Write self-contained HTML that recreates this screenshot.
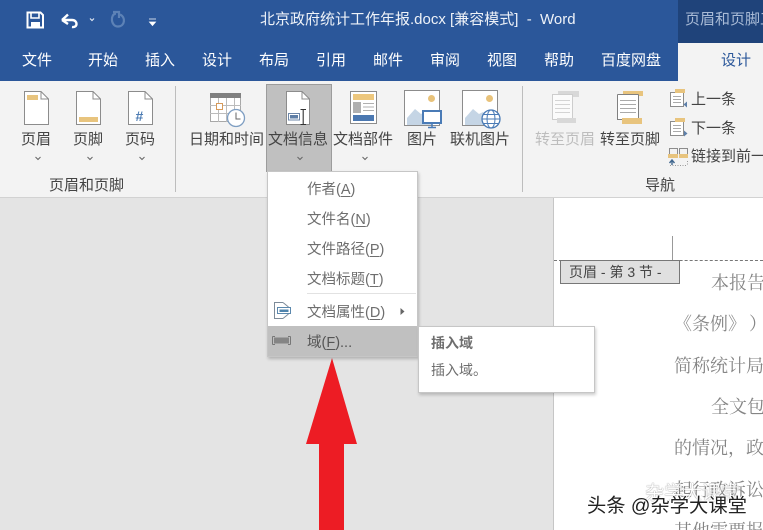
<!DOCTYPE html>
<html lang="zh">
<head>
<meta charset="utf-8">
<style>
html,body{margin:0;padding:0;width:763px;height:530px;overflow:hidden;background:#e4e4e4}
body{position:relative;font-family:"Liberation Sans","Noto Sans CJK SC",sans-serif}
.b{position:absolute}
.t{position:absolute;white-space:nowrap;font-size:15px;line-height:20px;height:20px;color:#444}
.w{color:#fff}
.m{color:#6e6e6e;font-size:14.5px}
.d{font-family:"Liberation Serif","Noto Serif CJK SC",serif;font-size:18px;color:#858585;line-height:24px;height:24px}
u{text-underline-offset:2px;text-decoration-thickness:1px}
svg{position:absolute;left:0;top:0}
</style>
</head>
<body>
<!-- chrome backgrounds -->
<div class="b" style="left:0;top:0;width:763px;height:81px;background:#2b579a"></div>
<div class="b" style="left:678px;top:0;width:85px;height:43px;background:#1f437a"></div>
<div class="b" style="left:0;top:81px;width:763px;height:116px;background:#f3f3f3;border-bottom:1px solid #d2d2d2"></div>
<div class="b" style="left:678px;top:43px;width:85px;height:38px;background:#f3f3f3"></div>
<div class="b" style="left:175px;top:86px;width:1px;height:106px;background:#bdbdbd"></div>
<div class="b" style="left:522px;top:86px;width:1px;height:106px;background:#bdbdbd"></div>
<div class="b" style="left:266px;top:84px;width:64px;height:86px;background:#c0c0c0;border:1px solid #9c9c9c"></div>
<!-- document page -->
<div class="b" style="left:553px;top:198px;width:210px;height:332px;background:#fff;border-left:1px solid #c6c6c6"></div>
<div class="b" style="left:554px;top:260px;width:209px;border-top:1px dashed #777"></div>
<div class="b" style="left:672px;top:236px;width:1px;height:24px;background:#999"></div>
<div class="b" style="left:560px;top:260px;width:118px;height:22px;background:#e0e0e0;border:1px solid #777"></div>
<div class="t" style="left:569px;top:262px;font-size:14px;color:#444">页眉 - 第 3 节 -</div>
<div class="t d" style="left:711px;top:271px">本报告</div>
<div class="t d" style="left:674px;top:312px">《条例》</div>
<div class="t d" style="left:749px;top:312px">）</div>
<div class="t d" style="left:674px;top:354px">简称统计局</div>
<div class="t d" style="left:711px;top:395px">全文包</div>
<div class="t d" style="left:674px;top:436px">的情况，政</div>
<div class="t d" style="left:674px;top:478px">起行政诉讼</div>
<div class="t d" style="left:674px;top:519px">其他需要报</div>
<!-- title bar -->
<div class="t w" style="left:260px;top:10px;color:#eef2f8">北京政府统计工作年报.docx [兼容模式]&nbsp; -&nbsp; Word</div>
<div class="t" style="left:685px;top:10px;width:78px;overflow:hidden;color:#a9bbd6">页眉和页脚工具</div>
<!-- tabs -->
<div class="t w" style="left:22px;top:51px">文件</div>
<div class="t w" style="left:88px;top:51px">开始</div>
<div class="t w" style="left:145px;top:51px">插入</div>
<div class="t w" style="left:202px;top:51px">设计</div>
<div class="t w" style="left:259px;top:51px">布局</div>
<div class="t w" style="left:316px;top:51px">引用</div>
<div class="t w" style="left:373px;top:51px">邮件</div>
<div class="t w" style="left:430px;top:51px">审阅</div>
<div class="t w" style="left:487px;top:51px">视图</div>
<div class="t w" style="left:544px;top:51px">帮助</div>
<div class="t w" style="left:601px;top:51px">百度网盘</div>
<div class="t" style="left:721px;top:51px;color:#2b579a">设计</div>
<!-- ribbon labels -->
<div class="t" style="left:21px;top:130px">页眉</div>
<div class="t" style="left:73px;top:130px">页脚</div>
<div class="t" style="left:125px;top:130px">页码</div>
<div class="t" style="left:189px;top:130px">日期和时间</div>
<div class="t" style="left:268px;top:130px">文档信息</div>
<div class="t" style="left:333px;top:130px">文档部件</div>
<div class="t" style="left:407px;top:130px">图片</div>
<div class="t" style="left:450px;top:130px">联机图片</div>
<div class="t" style="left:535px;top:130px;color:#bdbdbd">转至页眉</div>
<div class="t" style="left:600px;top:130px">转至页脚</div>
<div class="t" style="left:691px;top:90px">上一条</div>
<div class="t" style="left:691px;top:119px">下一条</div>
<div class="t" style="left:691px;top:147px">链接到前一条</div>
<div class="t" style="left:49px;top:176px">页眉和页脚</div>
<div class="t" style="left:645px;top:176px">导航</div>

<!-- icons -->
<svg width="763" height="530" viewBox="0 0 763 530" fill="none">
  <!-- QAT -->
  <path d="M27.5 12.5H40.5L43 15V27.5H27.5Z" stroke="#fff" stroke-width="2"/>
  <path d="M31 13V18H39V13" stroke="#fff" stroke-width="1.6"/>
  <rect x="31" y="22" width="9" height="5.5" fill="#fff"/>
  <path d="M62 20L68 14.5M62 20L68 24M63 20H72C78 20 78 28 72 27" stroke="#fff" stroke-width="2.4"/>
  <path d="M90 18.5L92 20.5L94 18.5" stroke="#dfe6f1" stroke-width="1.2"/>
  <path d="M116 13.5C110 14 110.500 26.500 118 26.500C125 26.500 126 17 120 14.500M113 12H119V18" stroke="#5d82b6" stroke-width="2.2"/>
  <path d="M149 19H156M149.500 22H155.500L152.500 25.500Z" fill="#fff" stroke="#fff" stroke-width="0.8"/>
  <!-- header -->
  <path d="M24.500 91.500H41L48.500 99V124.500H24.500Z" fill="#fff" stroke="#8c8c8c"/><path d="M41 91.500V99H48.500" stroke="#8c8c8c"/>
  <rect x="27" y="95" width="11" height="5" fill="#e8c47e"/>
  <!-- footer -->
  <path d="M76.500 91.500H93L100.500 99V124.500H76.500Z" fill="#fff" stroke="#8c8c8c"/><path d="M93 91.500V99H100.500" stroke="#8c8c8c"/>
  <rect x="79" y="117" width="19" height="5" fill="#e8c47e"/>
  <!-- page number -->
  <path d="M128.500 91.500H145L152.500 99V124.500H128.500Z" fill="#fff" stroke="#8c8c8c"/><path d="M145 91.500V99H152.500" stroke="#8c8c8c"/>
  <text x="135.500" y="121" font-family="Liberation Sans" font-size="14" font-weight="bold" fill="#4d7cb3">#</text>
  <!-- chevrons -->
  <path d="M35.500 157L38 159.500L40.500 157M87.500 157L90 159.500L92.500 157M139.500 157L142 159.500L144.500 157M297.500 157L300 159.500L302.500 157M362.500 157L365 159.500L367.500 157" stroke="#666" stroke-width="1"/>
  <!-- calendar -->
  <rect x="210.500" y="93.500" width="30" height="28" fill="#fff" stroke="#a8a8a8"/>
  <rect x="210" y="93" width="31" height="5" fill="#808080"/>
  <path d="M218.500 98V122M226.500 98V122M234.500 98V122M210 105.500H241M210 113.500H241" stroke="#bcbcbc"/>
  <rect x="216.500" y="103.500" width="6" height="6" fill="#fff" stroke="#d79a59"/>
  <circle cx="236" cy="118" r="8.500" fill="#fff" stroke="#7e9ec2" stroke-width="1.300"/>
  <path d="M236 112.500V119H240.500" stroke="#666"/>
  <!-- doc info -->
  <path d="M286.500 91.500H302L309.500 99V124.500H286.500Z" fill="#fff" stroke="#8c8c8c"/><path d="M302 91.500V99H309.500" stroke="#8c8c8c"/>
  <rect x="288.500" y="113.500" width="11" height="6.500" fill="#fff" stroke="#6e87a8"/>
  <rect x="290" y="115" width="8" height="3.500" fill="#5e7ea6"/>
  <path d="M300.500 109.500H306M300.500 124.500H306M303.200 109.500V124.500" stroke="#333" stroke-width="1.100"/>
  <!-- parts -->
  <rect x="350.500" y="91.500" width="26" height="32" fill="#fff" stroke="#8c8c8c"/>
  <rect x="353" y="94" width="21" height="6" fill="#edc77d"/>
  <rect x="353" y="102" width="8" height="11" fill="#b0b0b0"/>
  <path d="M363 103.500H374M363 107H374M363 110.500H374" stroke="#b0b0b0"/>
  <rect x="353" y="115" width="21" height="6" fill="#4b78b1"/>
  <!-- picture -->
  <rect x="404.500" y="90.500" width="35" height="35" fill="#fff" stroke="#8c8c8c"/>
  <circle cx="431.500" cy="98.500" r="3.500" fill="#e8c27a"/>
  <path d="M407 125V118L415 109L421 114L425 112L432 125Z" fill="#c5d5e5"/>
  <rect x="423" y="111" width="18" height="12" fill="#fff" stroke="#4a7bb6" stroke-width="2"/>
  <path d="M432 124V127M428 127.500H436" stroke="#4a7bb6" stroke-width="1.500"/>
  <!-- online picture -->
  <rect x="462.500" y="90.500" width="35" height="35" fill="#fff" stroke="#8c8c8c"/>
  <circle cx="489.500" cy="98.500" r="3.500" fill="#e8c27a"/>
  <path d="M465 125V118L473 109L479 114L483 112L490 125Z" fill="#c5d5e5"/>
  <circle cx="491" cy="119" r="9" fill="#fff" stroke="#4a7bb6" stroke-width="1.300"/>
  <ellipse cx="491" cy="119" rx="4" ry="9" stroke="#4a7bb6"/>
  <path d="M482 119H500M483.500 114.500H498.500M483.500 123.500H498.500" stroke="#4a7bb6"/>
  <!-- goto header (disabled) -->
  <rect x="558" y="91" width="21" height="6" fill="#d8d8d8"/>
  <rect x="552.500" y="94.500" width="20" height="25" fill="#fbfbfb" stroke="#cdcdcd"/>
  <path d="M555 100.500H570M555 104.500H570M555 108.500H570M555 112.500H570" stroke="#d4d4d4"/>
  <rect x="557" y="118" width="19" height="5" fill="#d8d8d8"/>
  <!-- goto footer -->
  <rect x="623" y="91" width="20" height="5" fill="#e8c47e"/>
  <rect x="618" y="95" width="20" height="24" fill="#fff"/>
  <path d="M638.500 94.500V119.500M617.500 94.500H638.500M617.500 94.500V119.500H622" stroke="#808080"/>
  <path d="M620 100.500H636M620 104.500H636M620 108.500H636M620 112.500H636" stroke="#aaa"/>
  <rect x="622" y="118" width="20" height="6" fill="#e8c47e"/>
  <!-- prev / next -->
  <rect x="670.500" y="92.500" width="13" height="14" fill="#fff" stroke="#8c8c8c"/>
  <rect x="675" y="89" width="10" height="4" fill="#e8c47e"/>
  <path d="M673 96.500H681M673 99.500H681M673 102.500H681" stroke="#aaa"/>
  <path d="M687 101.500V107.500L683.500 104.500Z" fill="#5d7fa9"/>
  <rect x="670.500" y="121.500" width="13" height="14" fill="#fff" stroke="#8c8c8c"/>
  <rect x="675" y="118" width="10" height="4" fill="#e8c47e"/>
  <path d="M673 125.500H681M673 128.500H681M673 131.500H681" stroke="#aaa"/>
  <path d="M684 130.500V136.500L687.500 133.500Z" fill="#5d7fa9"/>
  <!-- link -->
  <path d="M669.500 154V148.500H677.500V154M679.500 154V148.500H687.500V154" stroke="#8c8c8c"/>
  <rect x="668" y="154" width="10" height="4" fill="#e8c47e"/>
  <rect x="679" y="154" width="9" height="4" fill="#e8c47e"/>
  <path d="M670 165.500H686M687.500 161V165" stroke="#999" stroke-dasharray="1 1.500"/>
  <path d="M672 165V161M669.500 163L672 160L674.500 163" stroke="#42688f" stroke-width="1.400"/>
  <!-- arrow -->
  <path d="M332 358L357 444H344V530H319V444H306Z" fill="#ed1c24"/>
</svg>

<!-- dropdown menu -->
<div class="b" style="left:267px;top:171px;width:151px;height:186px;background:#fff;border:1px solid #c6c6c6;box-sizing:border-box;box-shadow:1px 2px 3px rgba(0,0,0,.22)"></div>
<div class="b" style="left:268px;top:326px;width:149px;height:30px;background:#c0c0c0"></div>
<div class="b" style="left:307px;top:293px;width:109px;height:1px;background:#e2e2e2"></div>
<div class="t m" style="left:307px;top:180px">作者(<u>A</u>)</div>
<div class="t m" style="left:307px;top:210px">文件名(<u>N</u>)</div>
<div class="t m" style="left:307px;top:240px">文件路径(<u>P</u>)</div>
<div class="t m" style="left:307px;top:270px">文档标题(<u>T</u>)</div>
<div class="t m" style="left:307px;top:303px">文档属性(<u>D</u>)</div>
<div class="t m" style="left:307px;top:333px;color:#555">域(<u>F</u>)...</div>
<!-- tooltip -->
<div class="b" style="left:418px;top:326px;width:177px;height:67px;background:#fff;border:1px solid #c6c6c6;box-sizing:border-box;box-shadow:1px 2px 3px rgba(0,0,0,.2)"></div>
<div class="t" style="left:431px;top:333px;font-size:14px;font-weight:bold;color:#6e6e6e">插入域</div>
<div class="t" style="left:431px;top:360px;font-size:14px;color:#6e6e6e">插入域。</div>
<svg width="763" height="530" viewBox="0 0 763 530" fill="none" style="pointer-events:none">
  <path d="M283 302.500H274.500V318.500H283M283 302.500L288.500 307M283 318.500L288.500 314" stroke="#7d8b99"/>
  <rect x="277.500" y="307.500" width="13" height="6" fill="#fff" stroke="#5b88ad"/>
  <rect x="279.500" y="309.500" width="9" height="2.500" fill="#4f84ad"/>
  <path d="M272.500 336.500V344.500M290.500 336.500V344.500M272.500 336.500H275M272.500 344.500H275M290.500 336.500H288M290.500 344.500H288" stroke="#777"/>
  <rect x="274" y="337.500" width="15" height="6" fill="#858585"/>
  <path d="M400.500 308L404.500 311.500L400.500 315Z" fill="#666"/>
</svg>
<!-- watermark -->
<div class="t" style="left:645px;top:483px;font-size:19px;line-height:22px;height:22px;color:#fff;text-shadow:0 0 1px #333;opacity:.85">杂学大课堂</div>
<div class="t" style="left:587px;top:496px;font-size:19.300px;line-height:22px;height:22px;color:#222;text-shadow:-1px 0 #fff,1px 0 #fff,0 -1px #fff,0 1px #fff">头条 @杂学大课堂</div>
</body>
</html>
